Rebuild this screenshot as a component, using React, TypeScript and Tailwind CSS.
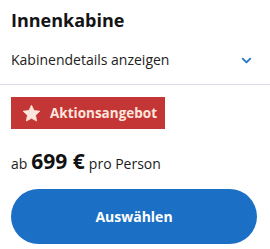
import { ChevronDown } from 'lucide-react';

const Star = () => (
  <svg viewBox="0 0 24 24" className="w-[19px] h-[19px]" fill="#fde6dc">
    <path d="M12 1.5l3.2 6.7 7.3.9-5.4 5.1 1.4 7.3L12 18l-6.5 3.5 1.4-7.3-5.4-5.1 7.3-.9z" strokeLinejoin="round" stroke="#fde6dc" strokeWidth={1} />
  </svg>
);

export default function App() {
  return (
    <div className="w-[270px] h-[249px] bg-white font-['Open_Sans',sans-serif] text-[#1c1c1c]">
      <div className="px-[11px] pt-[8px]">
        <h2 className="text-[18px] leading-[24px] font-bold text-[#141414]">Innenkabine</h2>
        <button className="w-full flex items-center justify-between pt-[18px] pb-[14px] text-left">
          <span className="text-[14px] leading-[20px] text-[#222]">Kabinendetails anzeigen</span>
          <ChevronDown className="w-[15px] h-[15px] text-[#2a78c8] mr-[5px]" strokeWidth={3} />
        </button>
      </div>
      <div className="h-px bg-[#dedde5]" />
      <div className="px-[11px] pt-[12px]">
        <div className="inline-flex items-center gap-[9px] h-[32px] pl-[11px] pr-[8px] bg-[#c43535]">
          <Star />
          <span className="text-[13.5px] font-bold text-[#fde6dc]">Aktionsangebot</span>
        </div>
        <div className="flex items-baseline mt-[17px] text-[14px] text-[#1c1c1c]">
          <span>ab</span>
          <span className="text-[21px] font-bold mx-[4px] text-[#111]">699 €</span>
          <span>pro Person</span>
        </div>
        <button className="mt-[11px] w-[246px] h-[55px] rounded-full bg-[#1b6fc4] text-white text-[14px] font-bold">
          Auswählen
        </button>
      </div>
    </div>
  );
}
